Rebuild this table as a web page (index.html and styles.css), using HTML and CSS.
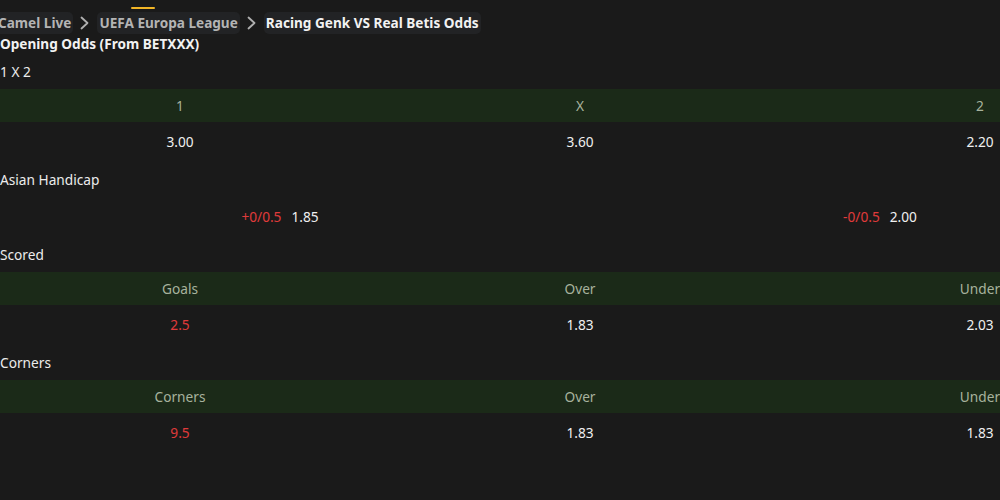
FILE: index.html
```html
<!DOCTYPE html>
<html>
<head>
<meta charset="utf-8">
<link rel="stylesheet" href="styles.css">
</head>
<body>
<div class="page">
  <div class="topline"><span class="marker"></span></div>
  <nav class="crumbs">
    <span class="chip chip-first">Camel Live</span>
    <span class="sep"><svg width="10" height="14" viewBox="0 0 10 14"><path d="M1.5 1.5 L7.5 7 L1.5 12.5" fill="none" stroke="#b0b0b0" stroke-width="1.8" stroke-linecap="round" stroke-linejoin="round"/></svg></span>
    <span class="chip">UEFA Europa League</span>
    <span class="sep"><svg width="10" height="14" viewBox="0 0 10 14"><path d="M1.5 1.5 L7.5 7 L1.5 12.5" fill="none" stroke="#b0b0b0" stroke-width="1.8" stroke-linecap="round" stroke-linejoin="round"/></svg></span>
    <span class="chip chip-current">Racing Genk VS Real Betis Odds</span>
  </nav>
  <h1 class="heading">Opening Odds (From BETXXX)</h1>

  <section class="market">
    <div class="title">1 X 2</div>
    <div class="cols3 head"><span>1</span><span>X</span><span>2</span></div>
    <div class="cols3 row"><span>3.00</span><span>3.60</span><span>2.20</span></div>
  </section>

  <section class="market">
    <div class="title">Asian Handicap</div>
    <div class="cols2 row">
      <span><em class="red">+0/0.5</em><b class="val">1.85</b></span>
      <span><em class="red">-0/0.5</em><b class="val">2.00</b></span>
    </div>
  </section>

  <section class="market">
    <div class="title">Scored</div>
    <div class="cols3 head"><span>Goals</span><span>Over</span><span>Under</span></div>
    <div class="cols3 row"><span class="red">2.5</span><span>1.83</span><span>2.03</span></div>
  </section>

  <section class="market">
    <div class="title">Corners</div>
    <div class="cols3 head"><span>Corners</span><span>Over</span><span>Under</span></div>
    <div class="cols3 row"><span class="red">9.5</span><span>1.83</span><span>1.83</span></div>
  </section>
</div>
</body>
</html>
```

FILE: styles.css
```css
html, body {
  margin: 0;
  padding: 0;
  background: #1a1a1a;
  overflow: hidden;
}
body {
  font-family: "Noto Sans", "Open Sans", sans-serif;
  font-size: 13.7px;
  color: #ececec;
  width: 1000px;
  height: 500px;
}
.page {
  width: 1160px;
}
.topline {
  height: 12px;
  display: flex;
  align-items: flex-start;
}
.marker {
  display: block;
  margin: 7px 0 0 131px;
  width: 24px;
  height: 2px;
  background: #f2b526;
  border-radius: 1px;
}
.crumbs {
  display: flex;
  align-items: center;
  height: 22px;
}
.chip {
  display: inline-block;
  height: 22px;
  line-height: 22px;
  padding: 0 2px;
  border-radius: 5px;
  background: #222325;
  font-size: 13.6px;
  font-weight: 700;
  color: #b4b4b4;
  white-space: nowrap;
}
.chip-first {
  margin-left: -4px;
}
.chip-current {
  color: #f2f2f2;
}
.sep {
  width: 24px;
  display: flex;
  justify-content: center;
  align-items: center;
}
.heading {
  margin: 0;
  font-size: 13.6px;
  font-weight: 700;
  line-height: 20px;
  color: #f2f2f2;
}
.title {
  height: 35px;
  line-height: 35px;
  color: #ececec;
}
.cols3 {
  display: grid;
  grid-template-columns: repeat(3, 360px);
  column-gap: 40px;
  text-align: center;
}
.cols2 {
  display: grid;
  grid-template-columns: repeat(2, 560px);
  column-gap: 40px;
  text-align: center;
}
.head {
  height: 33px;
  line-height: 33px;
  background: #1b2a18;
  color: #a7b29d;
}
.row {
  height: 40px;
  line-height: 40px;
  color: #f0f0f0;
}
.red {
  color: #e03b3b;
  font-style: normal;
}
.val {
  font-weight: 400;
  margin-left: 10px;
  color: #f0f0f0;
}
```
